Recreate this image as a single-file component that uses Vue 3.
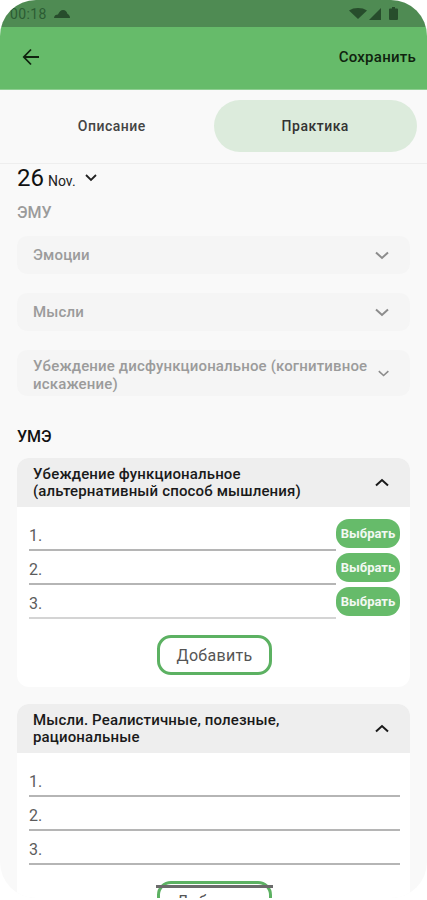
<template>
  <div class="screen">
    <div class="status">
      <span class="time">00:18</span>
      <svg class="cloud" width="16" height="8" viewBox="0 0 16 8"><path d="M0 8C0 5.500 2 4.500 4 4.500 5 2 7 0 9 0c2.500 0 4 2 4.500 4C15 4.500 16 6 16 8z" fill="#274d2c" /></svg>
      <span class="spacer"></span>
      <svg width="18" height="11" viewBox="0 0 18 11"><path d="M0 2.500C2.500.8 5.500 0 9 0s6.500.8 9 2.500L9 11z" fill="#274d2c" /></svg>
      <svg class="signal" width="12" height="12" viewBox="0 0 12 12"><path d="M12 0v12H0z" fill="#274d2c" /></svg>
      <svg class="battery" width="9" height="13" viewBox="0 0 9 13"><path d="M3 0h3v1.500h2a1 1 0 0 1 1 1V12a1 1 0 0 1-1 1H1a1 1 0 0 1-1-1V2.500a1 1 0 0 1 1-1h2z" fill="#274d2c" /></svg>
    </div>

    <header class="topbar">
      <svg width="18" height="18" viewBox="0 0 18 18" fill="none" stroke="#10230f" stroke-width="1.800"><path d="M17 9H2M9 1.500 1.800 9 9 16.500" /></svg>
      <span class="save">Сохранить</span>
    </header>

    <nav class="tabs">
      <div class="tab">Описание</div>
      <div class="tab active">Практика</div>
    </nav>

    <main class="content">
      <div class="date">
        <span class="day">26</span>
        <span class="month">Nov.</span>
        <svg width="12" height="8" viewBox="0 0 12 8" fill="none" stroke="#222" stroke-width="1.800"><path d="M1 1l5 5 5-5" /></svg>
      </div>

      <h3 class="section muted">ЭМУ</h3>
      <div v-for="item in selects" :key="item" class="select">
        <span>{{ item }}</span>
        <svg width="14" height="9" viewBox="0 0 14 9" fill="none" stroke="#8c8c8c" stroke-width="2"><path d="M1 1.500l6 5.500 6-5.500" /></svg>
      </div>

      <h3 class="section second">УМЭ</h3>

      <section v-for="card in cards" :key="card.title" class="card">
        <div class="card-head">
          <span>{{ card.title }}</span>
          <svg width="14" height="9" viewBox="0 0 14 9" fill="none" stroke="#1a1a1a" stroke-width="2"><path d="M1 7.500L7 2l6 5.500" /></svg>
        </div>
        <div class="card-body">
          <div v-for="n in 3" :key="n" class="row">
            <div class="line" :class="{ faint: card.pick && n === 3 }">{{ n }}.</div>
            <button v-if="card.pick" class="pick">Выбрать</button>
          </div>
          <button class="add" :class="{ glitch: !card.pick }">Добавить</button>
        </div>
      </section>
    </main>
  </div>
</template>

<script setup>
const selects = [
  'Эмоции',
  'Мысли',
  'Убеждение дисфункциональное (когнитивное искажение)'
]

const cards = [
  { title: 'Убеждение функциональное (альтернативный способ мышления)', pick: true },
  { title: 'Мысли. Реалистичные, полезные, рациональные', pick: false }
]
</script>

<style>
html, body {
  margin: 0;
  background: #fff;
}
</style>

<style scoped>
.screen {
  width: 427px;
  height: 898px;
  overflow: hidden;
  background: #f9f9f9;
  border-radius: 36px;
  font-family: Roboto, "Liberation Sans", sans-serif;
  color: #1a1a1a;
}
.status {
  height: 27px;
  box-sizing: border-box;
  padding: 0 29px 0 10px;
  display: flex;
  align-items: center;
  background: #4f8b53;
}
.time {
  font-size: 14px;
  letter-spacing: 0.4px;
  color: #2c5c33;
}
.cloud {
  margin-left: 7px;
}
.spacer {
  flex: 1;
}
.signal {
  margin-left: 2px;
}
.battery {
  margin-left: 8px;
}
.topbar {
  height: 63px;
  box-sizing: border-box;
  padding: 0 11px 2px 22px;
  display: flex;
  align-items: center;
  justify-content: space-between;
  background: #66bb6a;
  border-bottom: 1px solid #8fce92;
}
.save {
  font-size: 15px;
  font-weight: 500;
  letter-spacing: 0.25px;
  color: #10230f;
}
.tabs {
  height: 74px;
  box-sizing: border-box;
  padding: 10px 10px 11px 10px;
  display: flex;
  background: #f9f9f9;
  border-bottom: 1px solid #eeeeee;
}
.tab {
  flex: 1;
  display: flex;
  align-items: center;
  justify-content: center;
  border-radius: 26px;
  font-size: 14px;
  font-weight: 500;
  letter-spacing: 0.5px;
  color: #444;
}
.tab.active {
  background: #dcebdc;
  color: #333;
}
.content {
  padding: 0 17px;
}
.date {
  height: 28px;
  display: flex;
  align-items: center;
}
.day {
  font-size: 24px;
  color: #111;
}
.month {
  margin: 6px 9px 0 4px;
  font-size: 14px;
  color: #222;
}
.section {
  margin: 0;
  font-size: 16px;
  font-weight: 500;
  line-height: 20px;
}
.section.muted {
  margin-top: 11px;
  margin-bottom: 13px;
  color: #9b9b9b;
}
.section.second {
  margin-top: 31px;
  margin-bottom: 11px;
  color: #111;
}
.select {
  min-height: 38px;
  box-sizing: border-box;
  margin-bottom: 19px;
  padding: 5px 21px 5px 16px;
  display: flex;
  align-items: center;
  justify-content: space-between;
  gap: 8px;
  background: #f5f5f5;
  border-radius: 10px;
  font-size: 15px;
  font-weight: 500;
  letter-spacing: 0.15px;
  line-height: 18px;
  color: #9b9b9b;
}
.select:last-of-type {
  margin-bottom: 0;
  padding-top: 3px;
  padding-bottom: 3px;
}
.select:last-of-type span {
  margin-top: 4px;
}
.card {
  margin-bottom: 17px;
  background: #fff;
  border-radius: 12px;
  overflow: hidden;
}
.card-head {
  height: 49px;
  box-sizing: border-box;
  padding: 0 21px 0 16px;
  display: flex;
  align-items: center;
  justify-content: space-between;
  gap: 24px;
  background: #eeeeee;
  font-size: 15px;
  font-weight: 500;
  letter-spacing: 0.15px;
  line-height: 17px;
  color: #1a1a1a;
}
.card-head span {
  max-width: 290px;
}
.card-body {
  padding: 10px 10px 12px 12px;
  display: flex;
  flex-direction: column;
}
.row {
  height: 34px;
  display: flex;
  align-items: flex-end;
}
.line {
  flex: 1;
  height: 32px;
  box-sizing: border-box;
  padding-top: 7px;
  border-bottom: 2px solid #b5b5b5;
  font-size: 16px;
  color: #5c5c5c;
}
.line.faint {
  border-bottom-color: #d4d4d4;
}
.pick {
  width: 64px;
  height: 29px;
  align-self: flex-start;
  margin-top: 2px;
  padding: 0;
  border: 0;
  border-radius: 13px;
  background: #66bb6a;
  font-family: inherit;
  font-size: 13px;
  font-weight: 700;
  color: #f2f8f2;
}
.add {
  position: relative;
  width: 115px;
  height: 40px;
  margin: 16px auto 0;
  padding: 0;
  background: #fff;
  border: 3px solid #5cb162;
  border-radius: 14px;
  font-family: inherit;
  font-size: 16px;
  letter-spacing: 0.3px;
  color: #555;
}
.add.glitch::before {
  content: "";
  position: absolute;
  top: 1px;
  left: -4px;
  right: -4px;
  height: 3px;
  background: #6b6b6b;
}
</style>
